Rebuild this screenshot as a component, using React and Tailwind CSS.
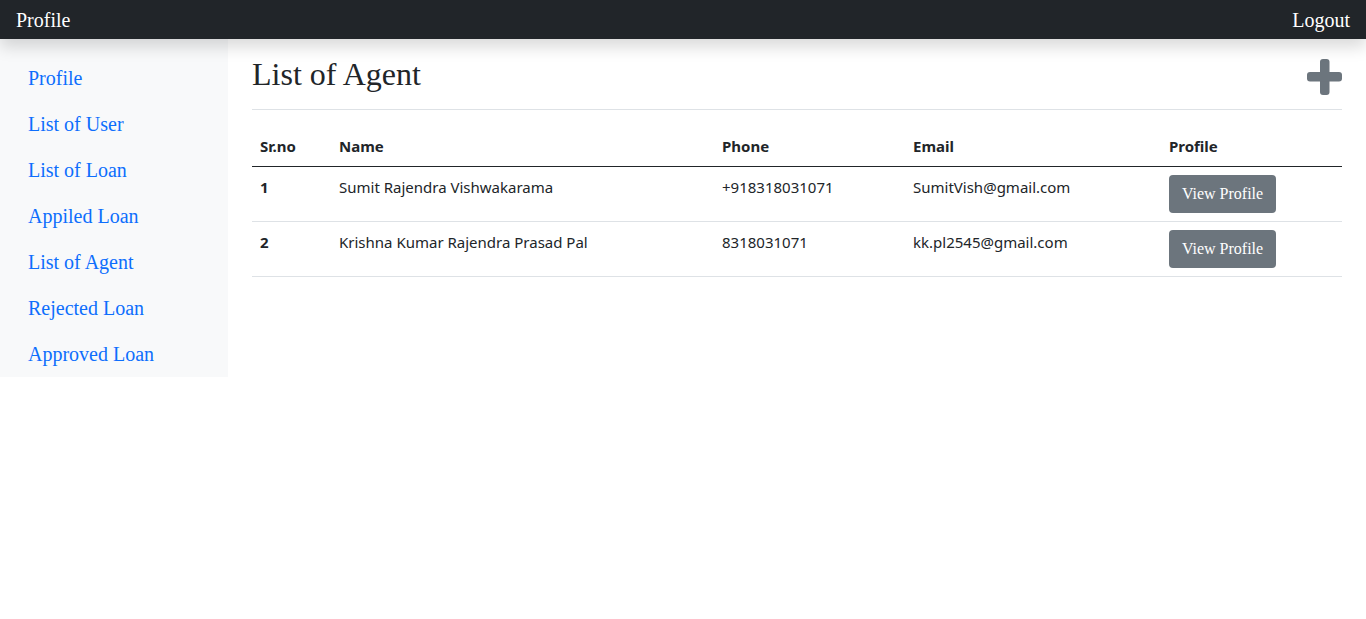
import React from "react";

const links = [
  "Profile",
  "List of User",
  "List of Loan",
  "Appiled Loan",
  "List of Agent",
  "Rejected Loan",
  "Approved Loan",
];

const agents = [
  { id: 1, name: "Sumit Rajendra Vishwakarama", phone: "+918318031071", email: "SumitVish@gmail.com" },
  { id: 2, name: "Krishna Kumar Rajendra Prasad Pal", phone: "8318031071", email: "kk.pl2545@gmail.com" },
];

const serif = { fontFamily: '"Liberation Serif", "Times New Roman", serif' };

const App = () => {
  return (
    <div className="min-h-screen bg-white" style={serif}>
      <nav className="relative z-10 flex h-[39px] items-center justify-between bg-[#212529] px-4 text-[20px] text-white shadow-[0_8px_16px_rgba(0,0,0,0.15)]">
        <span>Profile</span>
        <span>Logout</span>
      </nav>

      <div className="flex items-start">
        <aside className="w-[228px] shrink-0 bg-[#f8f9fa] pt-4">
          {links.map((link) => (
            <a
              key={link}
              href="#"
              className="block px-7 py-2 text-[20px] leading-[30px] text-[#0d6efd]"
            >
              {link}
            </a>
          ))}
        </aside>

        <main className="flex-1 px-6 pt-[16px]">
          <div className="flex h-[38px] items-start justify-between">
            <h2 className="text-[32px] leading-[38px] text-[#212529]">List of Agent</h2>
            <svg width="35" height="36" viewBox="0 0 35 36" className="mt-[4px]">
              <rect x="13" y="0" width="9.5" height="36" rx="3" fill="#6c757d" />
              <rect x="0" y="13" width="35" height="9.5" rx="3" fill="#6c757d" />
            </svg>
          </div>
          <hr className="mt-[16px] border-t border-[#dee2e6]" />

          <table
            className="mt-[16px] w-full border-collapse text-[15px] text-[#212529]"
            style={{ fontFamily: '"Noto Sans", "Open Sans", sans-serif' }}
          >
            <thead>
              <tr className="border-b border-[#212529]">
                <th className="w-[79px] px-2 py-2 text-left font-bold leading-6">Sr.no</th>
                <th className="w-[383px] px-2 py-2 text-left font-bold leading-6">Name</th>
                <th className="w-[191px] px-2 py-2 text-left font-bold leading-6">Phone</th>
                <th className="w-[256px] px-2 py-2 text-left font-bold leading-6">Email</th>
                <th className="px-2 py-2 text-left font-bold leading-6">Profile</th>
              </tr>
            </thead>
            <tbody>
              {agents.map((a) => (
                <tr key={a.id} className="border-b border-[#dee2e6]">
                  <td className="px-2 py-2 align-top font-bold leading-6">{a.id}</td>
                  <td className="px-2 py-2 align-top leading-6">{a.name}</td>
                  <td className="px-2 py-2 align-top leading-6">{a.phone}</td>
                  <td className="px-2 py-2 align-top leading-6">{a.email}</td>
                  <td className="px-2 py-2 align-top">
                    <button
                      className="block h-[38px] w-[107px] rounded bg-[#6c757d] text-[16px] text-white"
                      style={serif}
                    >
                      View Profile
                    </button>
                  </td>
                </tr>
              ))}
            </tbody>
          </table>
        </main>
      </div>
    </div>
  );
};

export default App;
